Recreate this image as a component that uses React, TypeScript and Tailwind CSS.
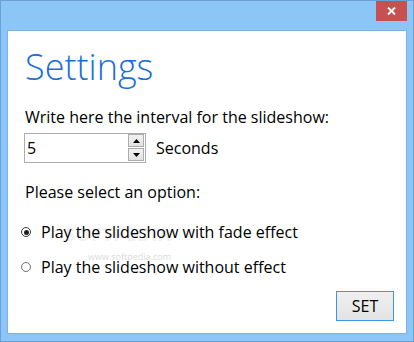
import React from "react";

function Radio({ checked }: { checked: boolean }) {
  return (
    <span
      className={
        "flex w-[10px] h-[10px] rounded-full border items-center justify-center bg-white " +
        (checked ? "border-[#3a3a3a]" : "border-[#6e6e6e]")
      }
    >
      {checked && <span className="w-[5px] h-[5px] rounded-full bg-[#1e1e1e]" />}
    </span>
  );
}

function SpinBtn({ up }: { up: boolean }) {
  return (
    <div className="h-[13px] w-[16px] border border-[#acacac] bg-gradient-to-b from-[#f2f2f2] to-[#e3e3e3] flex items-center justify-center">
      <svg width="7" height="4" viewBox="0 0 7 4">
        {up ? <polygon points="0,4 7,4 3.5,0" fill="#000" /> : <polygon points="0,0 7,0 3.5,4" fill="#000" />}
      </svg>
    </div>
  );
}

export default function App() {
  return (
    <div
      className="w-[414px] h-[342px] border border-[#6c9fd5] bg-[#8cc6f7] flex flex-col"
      style={{ fontFamily: '"Open Sans", "Noto Sans", sans-serif' }}
    >
      <div className="h-[29px] flex justify-end pr-[6px]">
        <div className="w-[31px] h-[20px] bg-[#c75050] flex items-center justify-center">
          <svg width="9" height="8" viewBox="0 0 9 8">
            <path d="M1 0.5 L8 7.5 M8 0.5 L1 7.5" stroke="#fff" strokeWidth="1.9" />
          </svg>
        </div>
      </div>
      <div className="relative mx-[6px] mb-[7px] flex-1 border border-[#7fb3e6] bg-white flex flex-col pl-[17px] text-black text-[16px]">
        <div className="absolute left-[57px] top-[194px] text-[18px] leading-[18px] font-bold tracking-[1px] text-[#f1f1f1] select-none">
          SOFTPEDIA
        </div>
        <div className="absolute left-[80px] top-[221px] text-[9px] leading-[10px] text-[#dcdcdc] select-none">
          www.softpedia.com
        </div>
        <div className="relative mt-[17px] text-[36px] leading-[38px] font-light text-[#1a6ed8]">Settings</div>
        <div className="relative mt-[21px] leading-[20px]">Write here the interval for the slideshow:</div>
        <div className="relative mt-[6px] flex items-center">
          <div className="ml-[-1px] w-[122px] h-[30px] border border-[#abadb3] flex items-stretch bg-white">
            <div className="flex-1 flex items-center pl-[2px] leading-[20px]">5</div>
            <div className="flex flex-col gap-[1px] mr-[1px]">
              <SpinBtn up />
              <SpinBtn up={false} />
            </div>
          </div>
          <div className="ml-[10px] leading-[20px]">Seconds</div>
        </div>
        <div className="relative mt-[19px] leading-[20px]">Please select an option:</div>
        <div className="relative mt-[20px] flex items-center leading-[20px] ml-[-4px]">
          <Radio checked />
          <span className="ml-[10px]">Play the slideshow with fade effect</span>
        </div>
        <div className="relative mt-[15px] flex items-center leading-[20px] ml-[-4px]">
          <Radio checked={false} />
          <span className="ml-[10px]">Play the slideshow without effect</span>
        </div>
        <div className="relative mt-[14px] self-end mr-[12px] w-[58px] h-[30px] border border-[#3d95e6] bg-gradient-to-b from-[#f0f0f0] to-[#e3e3e3] flex items-center justify-center leading-[20px]">
          SET
        </div>
      </div>
    </div>
  );
}
